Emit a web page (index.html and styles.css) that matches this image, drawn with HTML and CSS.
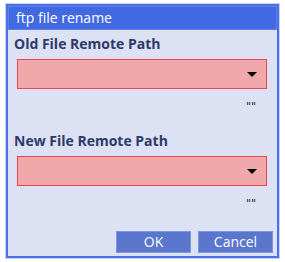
FILE: index.html
```html
<!DOCTYPE html>
<html>
<head>
<meta charset="utf-8">
<link rel="stylesheet" href="styles.css">
</head>
<body>
<div class="dialog">
  <div class="titlebar">ftp file rename</div>
  <div class="content">
    <div class="field">
      <div class="label">Old File Remote Path</div>
      <div class="select"><span class="arrow"></span></div>
      <div class="hint">""</div>
    </div>
    <div class="field second">
      <div class="label">New File Remote Path</div>
      <div class="select"><span class="arrow"></span></div>
      <div class="hint">""</div>
    </div>
    <div class="buttons">
      <button class="btn">OK</button>
      <button class="btn">Cancel</button>
    </div>
  </div>
</div>
</body>
</html>
```
FILE: styles.css
```css
html, body {
  margin: 0;
  padding: 0;
  background: #ffffff;
}
body {
  font-family: "Open Sans", "Noto Sans", sans-serif;
  padding: 3px 5px;
}
.dialog {
  width: 273px;
  height: 254px;
  box-sizing: border-box;
  border: 2px solid #4a6fe8;
  outline: 1px solid #c9d3f6;
  background: #dce1f4;
  display: flex;
  flex-direction: column;
  margin-top: 1px;
  margin-left: 1px;
}
.titlebar {
  height: 24px;
  box-sizing: border-box;
  background: #4169e1;
  border: 1px solid #5f80e6;
  color: #ffffff;
  font-size: 14px;
  line-height: 21px;
  padding-left: 7px;
}
.content {
  flex: 1;
  display: flex;
  flex-direction: column;
  padding: 4px 0 0 0;
}
.label {
  font-size: 14px;
  font-weight: bold;
  color: #2e3a69;
  padding-left: 6px;
  line-height: 20px;
}
.select {
  margin: 5px 0 0 9px;
  width: 250px;
  height: 30px;
  box-sizing: border-box;
  background: #f0a8aa;
  border: 1px solid #e8464c;
  display: flex;
  align-items: center;
  justify-content: flex-end;
  padding-right: 9px;
}
.arrow {
  width: 0;
  height: 0;
  border-left: 5px solid transparent;
  border-right: 5px solid transparent;
  border-top: 5px solid #000000;
}
.hint {
  font-family: "DejaVu Sans", sans-serif;
  font-size: 11px;
  color: #222;
  text-align: right;
  padding-right: 21px;
  line-height: 12px;
  margin-top: 12px;
}
.second {
  margin-top: 18px;
}
.buttons {
  margin-top: auto;
  display: flex;
  justify-content: flex-end;
  gap: 7px;
  padding: 0 4px 3px 0;
}
.btn {
  width: 75px;
  height: 22px;
  box-sizing: border-box;
  background: #5b76cd;
  border: 1px solid #7d95dc;
  color: #ffffff;
  font-family: "Open Sans", "Noto Sans", sans-serif;
  font-size: 14px;
  padding: 0;
  line-height: 18px;
}
```
